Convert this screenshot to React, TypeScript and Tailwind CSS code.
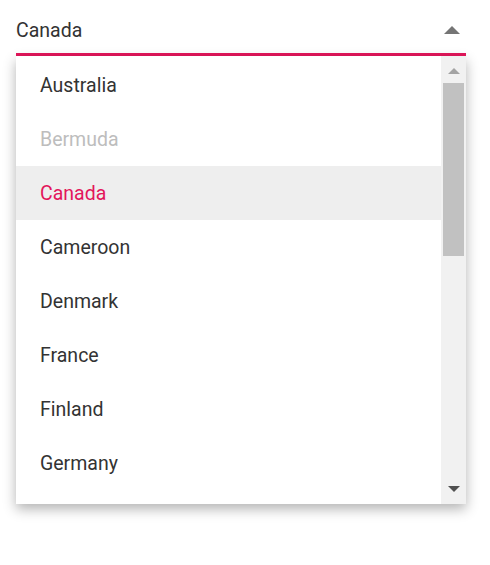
import { useState } from "react";

const countries = [
  { name: "Australia" },
  { name: "Bermuda", disabled: true },
  { name: "Canada" },
  { name: "Cameroon" },
  { name: "Denmark" },
  { name: "France" },
  { name: "Finland" },
  { name: "Germany" },
];

function ScrollBar() {
  return (
    <div className="flex w-[25px] shrink-0 flex-col items-center bg-[#f1f1f1]">
      <div className="flex h-[27px] w-full items-center justify-center pt-[2px]">
        <span className="h-0 w-0 border-x-[6px] border-b-[6px] border-x-transparent border-b-[#a3a3a3]" />
      </div>
      <div className="h-[173px] w-[21px] bg-[#c1c1c1]" />
      <div className="flex-1" />
      <div className="flex h-[26px] w-full items-center justify-center pb-[4px]">
        <span className="h-0 w-0 border-x-[6px] border-t-[6px] border-x-transparent border-t-[#505050]" />
      </div>
    </div>
  );
}

export default function App() {
  const [value] = useState("Canada");

  return (
    <div
      className="h-[565px] w-[490px] bg-white"
      style={{ fontFamily: "Roboto, 'Liberation Sans', sans-serif" }}
    >
      <div className="ml-4 w-[450px]">
        {/* Input with underline */}
        <div className="flex h-[53px] items-center justify-between pt-[6px] text-[19.5px] text-[#333333]">
          <span className="pt-[2px]">{value}</span>
          <span className="mr-[6px] h-0 w-0 border-x-[8px] border-b-[8px] border-x-transparent border-b-[#757575]" />
        </div>
        <div className="h-[3px] bg-[#e3165b]" />

        {/* Popup list */}
        <div className="flex h-[448px] bg-white shadow-[0_5px_12px_rgba(0,0,0,0.3)]">
          <ul className="flex-1 overflow-hidden pt-[2px]">
            {countries.map((c) => {
              const selected = c.name === value;
              return (
                <li
                  key={c.name}
                  className={`flex h-[54px] items-center pl-6 pt-[2px] text-[19.5px] ${
                    selected
                      ? "bg-[#eeeeee] text-[#e3165b]"
                      : c.disabled
                        ? "text-[#bdbdbd]"
                        : "text-[#333333]"
                  }`}
                >
                  {c.name}
                </li>
              );
            })}
          </ul>
          <ScrollBar />
        </div>
      </div>
    </div>
  );
}
